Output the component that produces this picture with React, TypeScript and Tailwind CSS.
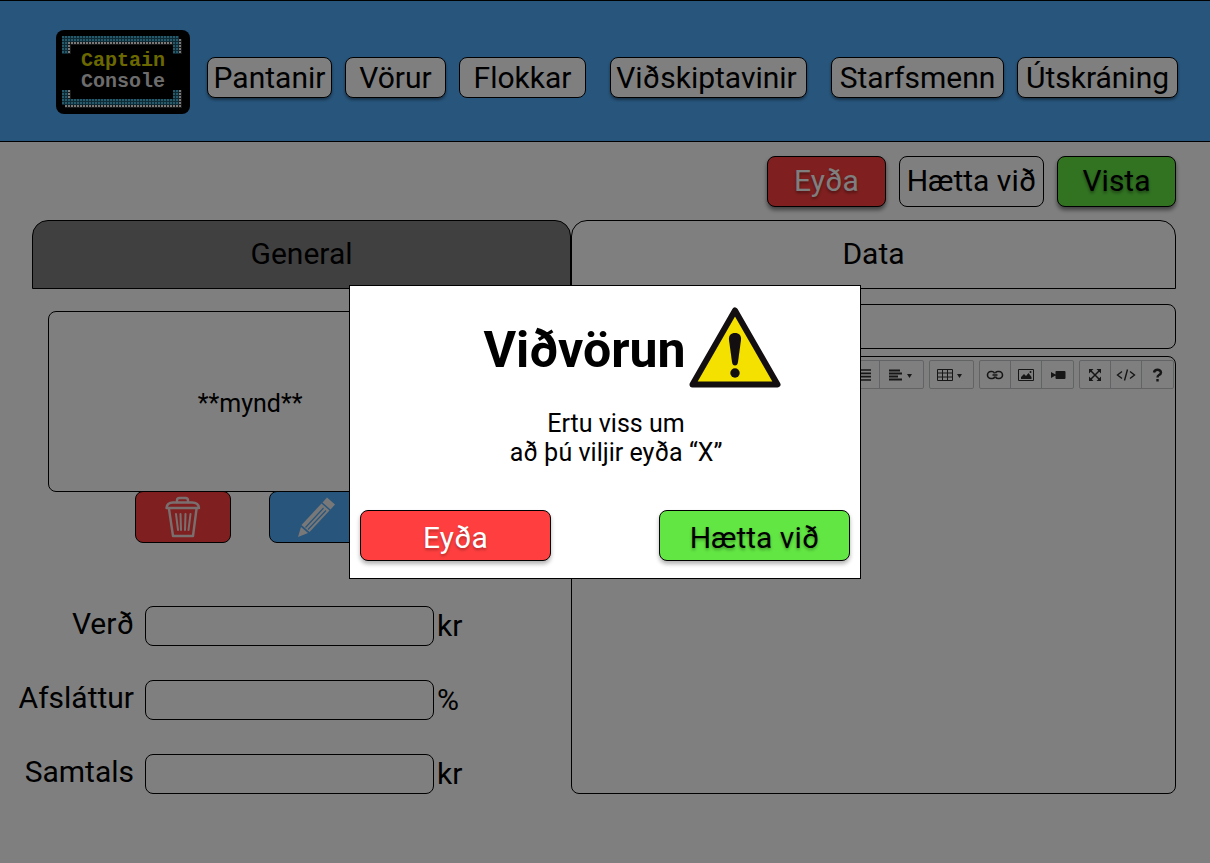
import type { ReactNode } from "react";

const navItems = [
  { label: "Pantanir", className: "w-[125px] ml-[17px] shadow-[0_2px_3px_rgba(0,0,0,0.4)]" },
  { label: "Vörur", className: "w-[101px] ml-[13px] shadow-[0_2px_3px_rgba(0,0,0,0.4)]" },
  { label: "Flokkar", className: "w-[127px] ml-[13px]" },
  { label: "Viðskiptavinir", className: "w-[197px] ml-6 pr-1 shadow-[0_2px_3px_rgba(0,0,0,0.4)]" },
  { label: "Starfsmenn", className: "w-[173px] ml-6 shadow-[0_2px_3px_rgba(0,0,0,0.4)]" },
  { label: "Útskráning", className: "w-[161px] ml-[13px] shadow-[0_2px_3px_rgba(0,0,0,0.4)]" },
];

const fields = [
  { id: "verd", label: "Verð", unit: "kr" },
  { id: "afslattur", label: "Afsláttur", unit: "%" },
  { id: "samtals", label: "Samtals", unit: "kr" },
];

function Logo() {
  return (
    <svg width="134" height="84" viewBox="0 0 134 84" className="shrink-0" role="img" aria-label="Captain Console">
      <defs>
        <pattern id="teal" width="3" height="3" patternUnits="userSpaceOnUse">
          <rect width="3" height="3" fill="#1c5468" />
          <rect width="2" height="2" fill="#4db4d4" />
        </pattern>
        <pattern id="white" width="3" height="3" patternUnits="userSpaceOnUse">
          <rect width="3" height="3" fill="#333" />
          <rect width="2" height="2" fill="#f4f4f4" />
        </pattern>
      </defs>
      <rect width="134" height="84" rx="8" fill="#000" />
      <path d="M6 6H123V24H117V12H12V24H6Z" fill="url(#teal)" />
      <path d="M12 12H117V15H15V24H12ZM123 9H126V24H123Z" fill="url(#white)" />
      <path d="M6 60H12V69H117V60H123V75H9V75H6Z" fill="url(#teal)" />
      <path d="M12 60H15V69H12ZM123 60H126V78H9V75H123Z" fill="url(#white)" />
      <g fontFamily="'Liberation Mono', monospace" fontWeight="700" fontSize="20" textAnchor="middle">
        <text x="67" y="36" fill="#d6d000">Captain</text>
        <text x="67" y="57" fill="#d8d8d8">Console</text>
      </g>
    </svg>
  );
}

function TrashIcon() {
  return (
    <svg width="36" height="42" viewBox="0 0 36 42" fill="none" stroke="#f5dede" strokeWidth="2.400" strokeLinecap="round" strokeLinejoin="round" aria-hidden="true">
      <path d="M12 6V4.500Q12 2 14.500 2H20.500Q23 2 23 4.500V6" />
      <path d="M1.500 12Q2 6.500 8 6.500H27Q33.500 6.500 34 12Z" />
      <path d="M4 13L8 40H28L31.500 13" />
      <path d="M11 18L13 34M15.500 18L16 34M20.500 18L20 34M25.500 18L23.500 34" strokeWidth="2" />
    </svg>
  );
}

function PencilIcon() {
  return (
    <svg width="40" height="42" viewBox="0 0 40 42" aria-hidden="true">
      <path d="M30 1.500L38 8.500L33.500 13.500L25.500 6.500Z" fill="#f0f0f0" />
      <path d="M24.500 7.500L32.500 14.500L12.500 36L4.500 29Z" fill="#f0f0f0" />
      <path d="M26.500 12L8.500 31.500M29 14.500L11 33.500" stroke="#50aaf8" strokeWidth="1.200" />
      <path d="M4 31L11 37L1 41Z" fill="#f0f0f0" />
    </svg>
  );
}

function WarningIcon() {
  return (
    <svg width="92" height="82" viewBox="0 0 92 82" className="shrink-0" role="img" aria-label="Aðvörun">
      <path d="M46 3.500L88.500 77.500H3.500Z" fill="#f5e100" stroke="#130f10" strokeWidth="6" strokeLinejoin="round" />
      <path d="M46 26C42 26 39.500 28.500 40 33L43 55Q43.500 58.500 46 58.500T49 55L52 33C52.500 28.500 50 26 46 26Z" fill="#130f10" />
      <circle cx="46" cy="66" r="4.700" fill="#130f10" />
    </svg>
  );
}

function Caret() {
  return (
    <svg width="5" height="4" viewBox="0 0 5 4" className="mt-0.5 mr-1" aria-hidden="true">
      <path d="M0 0H5L2.500 4Z" fill="#333" />
    </svg>
  );
}

function Glyph({ children }: { children: ReactNode }) {
  return (
    <svg width="20" height="16" viewBox="0 0 20 16" fill="none" stroke="#2c2c2c" aria-hidden="true">
      {children}
    </svg>
  );
}

function Tool({ label, wide, children }: { label: string; wide?: boolean; children: ReactNode }) {
  return (
    <button type="button" aria-label={label} className={wide ? "flex h-[27px] w-[43px] items-center justify-center" : "flex h-[27px] w-[31px] items-center justify-center"}>
      {children}
    </button>
  );
}

function ToolGroup({ children }: { children: ReactNode }) {
  return <div className="flex divide-x divide-[#c4c6ca] rounded-xs border border-[#c4c6ca]">{children}</div>;
}

function Toolbar() {
  return (
    <div className="flex justify-end gap-[5px] pt-[3px] pr-px">
      <ToolGroup>
        <Tool label="Listi">
          <Glyph><path d="M5 3H17M5 6.300H17M5 9.600H17M5 13H17" strokeWidth="1.700" /></Glyph>
        </Tool>
        <Tool label="Jöfnun" wide>
          <Glyph><path d="M2 3.500H13M2 6.500H15M2 9.500H11M2 12.500H15" strokeWidth="1.800" /></Glyph>
          <Caret />
        </Tool>
      </ToolGroup>
      <ToolGroup>
        <Tool label="Tafla" wide>
          <Glyph><path d="M0.500 2.500H15.500V13.500H0.500ZM0.500 6H15.500M0.500 10H15.500M5.500 2.500V13.500M10.500 2.500V13.500" /></Glyph>
          <Caret />
        </Tool>
      </ToolGroup>
      <ToolGroup>
        <Tool label="Tengill">
          <Glyph>
            <path d="M9.500 6.500Q9 4.500 7 4.500H6A3.500 3.500 0 0 0 6 11.500H7.500Q9.300 11.500 9.800 9.500M7.500 8H12.500M10.500 9.500Q11 11.500 13 11.500H14A3.500 3.500 0 0 0 14 4.500H12.500Q11 4.500 10.500 6.200" strokeWidth="1.600" />
          </Glyph>
        </Tool>
        <Tool label="Mynd">
          <Glyph>
            <path d="M2.500 2.500H17.500V13.500H2.500Z" />
            <path d="M5 12V10L8 7L10 9L12.500 6L15.500 10V12Z" fill="#2c2c2c" stroke="none" />
            <circle cx="14.500" cy="5" r="1" fill="#2c2c2c" stroke="none" />
          </Glyph>
        </Tool>
        <Tool label="Myndband">
          <Glyph>
            <path d="M3 5L7.500 7.500V8.500L3 11ZM7.500 4.500Q7.500 4 8.500 4H16.500Q17.500 4 17.500 5V11Q17.500 12 16.500 12H8.500Q7.500 12 7.500 11Z" fill="#2c2c2c" stroke="none" />
          </Glyph>
        </Tool>
      </ToolGroup>
      <ToolGroup>
        <Tool label="Fylla skjá">
          <Glyph>
            <path d="M5 3L15 13M15 3L5 13" strokeWidth="1.500" />
            <path d="M4 2H8.500L4 6.500ZM16 2V6.500L11.500 2ZM4 14V9.500L8.500 14ZM16 14H11.500L16 9.500Z" fill="#2c2c2c" stroke="none" />
          </Glyph>
        </Tool>
        <Tool label="Kóði">
          <Glyph><path d="M6 4.500L1.500 8L6 11.500M14 4.500L18.500 8L14 11.500M11.500 2.500L8.500 13.500" strokeWidth="1.400" /></Glyph>
        </Tool>
        <Tool label="Hjálp">
          <Glyph>
            <path d="M6 5.500Q6.500 2.800 9.500 2.800T13 5.500Q13 7 11 8Q9.500 8.800 9.500 10.500" strokeWidth="2.400" />
            <path d="M8.300 12H10.700V14.500H8.300Z" fill="#2c2c2c" stroke="none" />
          </Glyph>
        </Tool>
      </ToolGroup>
    </div>
  );
}

export default function App() {
  return (
    <div className="relative min-h-screen bg-white font-[Roboto,sans-serif] text-[30px] leading-[35px] text-black">
      <header className="flex h-[142px] items-center border-y border-black bg-[#50aaf8] pt-px pl-14">
        <Logo />
        <nav className="mt-3 flex">
          {navItems.map((item) => (
            <a key={item.label} href="#" className={`flex h-[41px] items-center justify-center rounded-lg border border-black bg-white ${item.className}`}>
              {item.label}
            </a>
          ))}
        </nav>
      </header>

      <main className="pr-[34px] pl-8">
        <div className="flex justify-end gap-[13px] pt-[14px]">
          <button type="button" className="h-[51px] w-[119px] rounded-lg border border-black bg-[#ff3f3f] pb-0.5 text-white shadow-[0_3px_4px_rgba(0,0,0,0.5)] [text-shadow:0_2px_3px_rgba(0,0,0,0.4)]">Eyða</button>
          <button type="button" className="h-[51px] w-[145px] rounded-lg border border-black bg-white pb-0.5">Hætta við</button>
          <button type="button" className="h-[51px] w-[119px] rounded-lg border border-black bg-[#62e643] pb-0.5 shadow-[0_3px_4px_rgba(0,0,0,0.5)] [text-shadow:0_2px_3px_rgba(0,0,0,0.4)]">Vista</button>
        </div>

        <div role="tablist" className="mt-[13px] grid grid-cols-[539fr_605fr]">
          <button type="button" role="tab" aria-selected="false" className="h-[69px] rounded-t-2xl border border-black bg-[#808080] pb-0.5">General</button>
          <button type="button" role="tab" aria-selected="true" className="h-[69px] rounded-t-2xl border border-black bg-white pb-0.5">Data</button>
        </div>

        <div className="grid grid-cols-[539fr_605fr]">
          <section className="pt-[22px]">
            <div className="ml-4 w-3/4">
              <div className="flex h-[181px] items-center justify-center rounded-lg border border-black pt-1 text-[25px]">**mynd**</div>
              <div className="-mt-px flex justify-center gap-[38px]">
                <button type="button" aria-label="Eyða mynd" className="flex h-[52px] w-24 items-center justify-center rounded-lg border border-black bg-[#ff3f3f]">
                  <TrashIcon />
                </button>
                <button type="button" aria-label="Breyta mynd" className="flex h-[52px] w-24 items-center justify-center rounded-lg border border-black bg-[#50aaf8]">
                  <PencilIcon />
                </button>
              </div>
            </div>
            <div className="mt-[63px] -ml-4 flex flex-col gap-[34px]">
              {fields.map((field) => (
                <div key={field.id} className="flex h-10 items-center">
                  <label htmlFor={field.id} className="w-[118px] pb-1.5 text-right">{field.label}</label>
                  <input id={field.id} className="ml-[11px] h-10 w-[289px] rounded-lg border border-black bg-white px-3" />
                  <span className="ml-[3px] pb-0.5">{field.unit}</span>
                </div>
              ))}
            </div>
          </section>

          <section className="flex flex-col gap-[7px] pt-[15px]">
            <input aria-label="Titill" className="h-[45px] w-full rounded-lg border border-black bg-white px-3" />
            <div className="flex h-[438px] flex-col rounded-lg border border-black">
              <Toolbar />
              <textarea aria-label="Lýsing" className="w-full flex-1 resize-none bg-transparent px-3 outline-none" />
            </div>
          </section>
        </div>
      </main>

      <div className="absolute inset-0 flex items-center justify-center bg-black/50">
        <div role="dialog" aria-modal="true" aria-labelledby="dialog-title" className="w-[512px] border border-black bg-white px-[10px] pt-[21px] pb-[17px]">
          <div className="flex items-center justify-center gap-[3px] pl-[54px]">
            <h1 id="dialog-title" className="pt-1 text-[50px] leading-[58px] font-bold">Viðvörun</h1>
            <WarningIcon />
          </div>
          <p className="mt-5 pl-[22px] text-center text-[25px] leading-[29px]">
            Ertu viss um
            <br />
            að þú viljir eyða “X”
          </p>
          <div className="mt-[43px] flex justify-between">
            <button type="button" className="h-[51px] w-[191px] rounded-lg border border-black bg-[#ff3f3f] pt-1 text-white shadow-[0_3px_4px_rgba(0,0,0,0.3)] [text-shadow:0_2px_3px_rgba(0,0,0,0.3)]">Eyða</button>
            <button type="button" className="h-[51px] w-[191px] rounded-lg border border-black bg-[#62e643] pt-1 shadow-[0_3px_4px_rgba(0,0,0,0.3)] [text-shadow:0_2px_3px_rgba(0,0,0,0.3)]">Hætta við</button>
          </div>
        </div>
      </div>
    </div>
  );
}
